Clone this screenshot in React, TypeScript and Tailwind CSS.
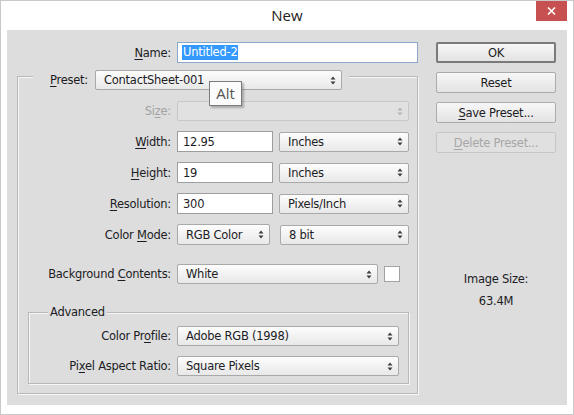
import React from 'react';

const UI = "font-['DejaVu_Sans',sans-serif] text-[11.5px] tracking-[-0.25px] text-[#1c1c24]";

function Arrows({ muted }: { muted?: boolean }) {
  return (
    <svg width="6" height="9" viewBox="0 0 6 9" className="shrink-0">
      <path d="M0.5 3.5 L3 0.5 L5.5 3.5 Z M0.5 5.5 L5.5 5.5 L3 8.5 Z" fill={muted ? '#b4b4b4' : '#3c3c3c'} />
    </svg>
  );
}

function Select({ value, className = '', disabled }: { value?: string; className?: string; disabled?: boolean }) {
  const skin = disabled
    ? 'border-[#c8c8c8] bg-[#e1e1e1]'
    : 'border-[#a9a9a9] bg-linear-to-b from-[#fdfdfd] to-[#e8e8e8]';
  return (
    <div className={`flex items-center justify-between h-[20px] pl-[8px] pr-[5px] rounded-[2px] border ${skin} ${className}`}>
      <span className="leading-[14px] whitespace-nowrap">{value}</span>
      <Arrows muted={disabled} />
    </div>
  );
}

function TextInput({ children, className = '' }: { children: React.ReactNode; className?: string }) {
  return (
    <div className={`flex items-center h-[21px] pl-[5px] bg-white border border-[#9d9d9d] ${className}`}>
      <span className="leading-[14px]">{children}</span>
    </div>
  );
}

function Label({ children, className = '', muted }: { children: React.ReactNode; className?: string; muted?: boolean }) {
  return (
    <div className={`text-right leading-[14px] whitespace-nowrap ${muted ? 'text-[#a3a3a3]' : ''} ${className}`}>
      {children}
    </div>
  );
}

function U({ children }: { children: React.ReactNode }) {
  return <span className="underline decoration-1 underline-offset-[2px]">{children}</span>;
}

function Button({ children, primary, disabled }: { children: React.ReactNode; primary?: boolean; disabled?: boolean }) {
  const skin = disabled
    ? 'border border-[#c6c6c6] bg-[#e0e0e0] text-[#a6a6a6]'
    : primary
      ? 'border-2 border-[#7a7a7a] bg-linear-to-b from-[#f7f7f7] to-[#e3e3e3]'
      : 'border border-[#ababab] bg-linear-to-b from-[#f7f7f7] to-[#e3e3e3]';
  return (
    <div className={`flex items-center justify-center w-[120px] h-[21px] rounded-[2px] leading-[14px] ${skin}`}>
      {children}
    </div>
  );
}

export default function App() {
  return (
    <div className={`relative w-[574px] h-[415px] bg-white border border-[#c9c9c9] flex flex-col ${UI}`}>
      {/* title bar */}
      <div className="relative h-[29px] flex items-center justify-center shrink-0">
        <span className="font-['Open_Sans',sans-serif] text-[15px] tracking-normal text-[#222]">New</span>
        <div className="absolute top-0 right-[6px] w-[31px] h-[20px] bg-[#c75050] flex items-center justify-center">
          <svg width="9" height="8" viewBox="0 0 9 8">
            <path d="M1 0.5 L8 7.5 M8 0.5 L1 7.5" stroke="#fff" strokeWidth="1.6" />
          </svg>
        </div>
      </div>

      {/* body */}
      <div className="flex flex-1 mx-[6px] mb-[9px] bg-[#dddddd]">
        {/* left */}
        <div className="w-[418px] flex flex-col">
          <div className="flex items-center gap-[6px] mt-[12px]">
            <Label className="w-[164px]"><U>N</U>ame:</Label>
            <div className="flex items-center h-[21px] w-[241px] pl-[4px] bg-white border border-[#8aa8cb]">
              <span className="leading-[15px] bg-[#3399ff] text-white px-[1px]">Untitled-2</span>
            </div>
          </div>

          {/* preset group */}
          <div className="mt-[13px] ml-[10px] w-[401px] h-[318px] border border-[#b8b8b8] shadow-[1px_1px_0_#f6f6f6,inset_1px_1px_0_#f6f6f6] flex flex-col">
            <div className="-mt-[7px] ml-[15px] self-start flex items-center bg-[#dddddd] pl-[17px] pr-[7px]">
              <Label className="mr-[7px]"><U>P</U>reset:</Label>
              <Select value="ContactSheet-001" className="w-[247px]" />
            </div>

            <div className="flex items-center gap-[6px] mt-[11px]">
              <Label muted className="w-[153px]">Si<U>z</U>e:</Label>
              <Select disabled className="w-[232px]" />
            </div>

            <div className="flex items-center gap-[6px] mt-[10px]">
              <Label className="w-[153px]"><U>W</U>idth:</Label>
              <TextInput className="w-[96px]">12.95</TextInput>
              <Select value="Inches" className="w-[130px]" />
            </div>

            <div className="flex items-center gap-[6px] mt-[10px]">
              <Label className="w-[153px]"><U>H</U>eight:</Label>
              <TextInput className="w-[96px]">19</TextInput>
              <Select value="Inches" className="w-[130px]" />
            </div>

            <div className="flex items-center gap-[6px] mt-[10px]">
              <Label className="w-[153px]"><U>R</U>esolution:</Label>
              <TextInput className="w-[96px]">300</TextInput>
              <Select value="Pixels/Inch" className="w-[130px]" />
            </div>

            <div className="flex items-center h-[21px] gap-[6px] mt-[10px]">
              <Label className="w-[153px]">Color <U>M</U>ode:</Label>
              <Select value="RGB Color" className="w-[93px] h-[21px]" />
              <Select value="8 bit" className="w-[129px] ml-[4px]" />
            </div>

            <div className="flex items-center gap-[6px] mt-[19px]">
              <Label className="w-[153px]">Background <U>C</U>ontents:</Label>
              <Select value="White" className="w-[201px]" />
              <div className="w-[16px] h-[16px] bg-white border border-[#a2a2a2]" />
            </div>

            {/* advanced group */}
            <div className="mt-[28px] ml-[10px] w-[381px] h-[72px] border border-[#b8b8b8] shadow-[1px_1px_0_#f6f6f6,inset_1px_1px_0_#f6f6f6] flex flex-col">
              <div className="-mt-[8px] ml-[19px] self-start bg-[#dddddd] px-[2px] leading-[14px]">Advanced</div>
              <div className="flex items-center gap-[6px] mt-[7px]">
                <Label className="w-[142px]">Color Pr<U>o</U>file:</Label>
                <Select value="Adobe RGB (1998)" className="w-[222px]" />
              </div>
              <div className="flex items-center gap-[6px] mt-[10px]">
                <Label className="w-[142px]">Pi<U>x</U>el Aspect Ratio:</Label>
                <Select value="Square Pixels" className="w-[222px]" />
              </div>
            </div>
          </div>
        </div>

        {/* right */}
        <div className="flex-1 flex flex-col pl-[11px] pt-[12px]">
          <div className="flex flex-col gap-[9px]">
            <Button primary>OK</Button>
            <Button>Reset</Button>
            <Button><U>S</U>ave Preset...</Button>
            <Button disabled><U>D</U>elete Preset...</Button>
          </div>
          <div className="w-[120px] flex flex-col items-center mt-[119px] leading-[14px]">
            <span>Image Size:</span>
            <span className="mt-[8px]">63.4M</span>
          </div>
        </div>
      </div>

      {/* Alt tooltip */}
      <div className="absolute left-[208px] top-[80px] w-[33px] h-[25px] bg-[#fbfbfb] border border-[#7b7b7b] shadow-[2px_2px_2px_rgba(0,0,0,0.25)] flex items-center justify-center">
        <span className="font-['Open_Sans',sans-serif] text-[15px] tracking-normal text-[#555] leading-none">Alt</span>
      </div>
    </div>
  );
}
